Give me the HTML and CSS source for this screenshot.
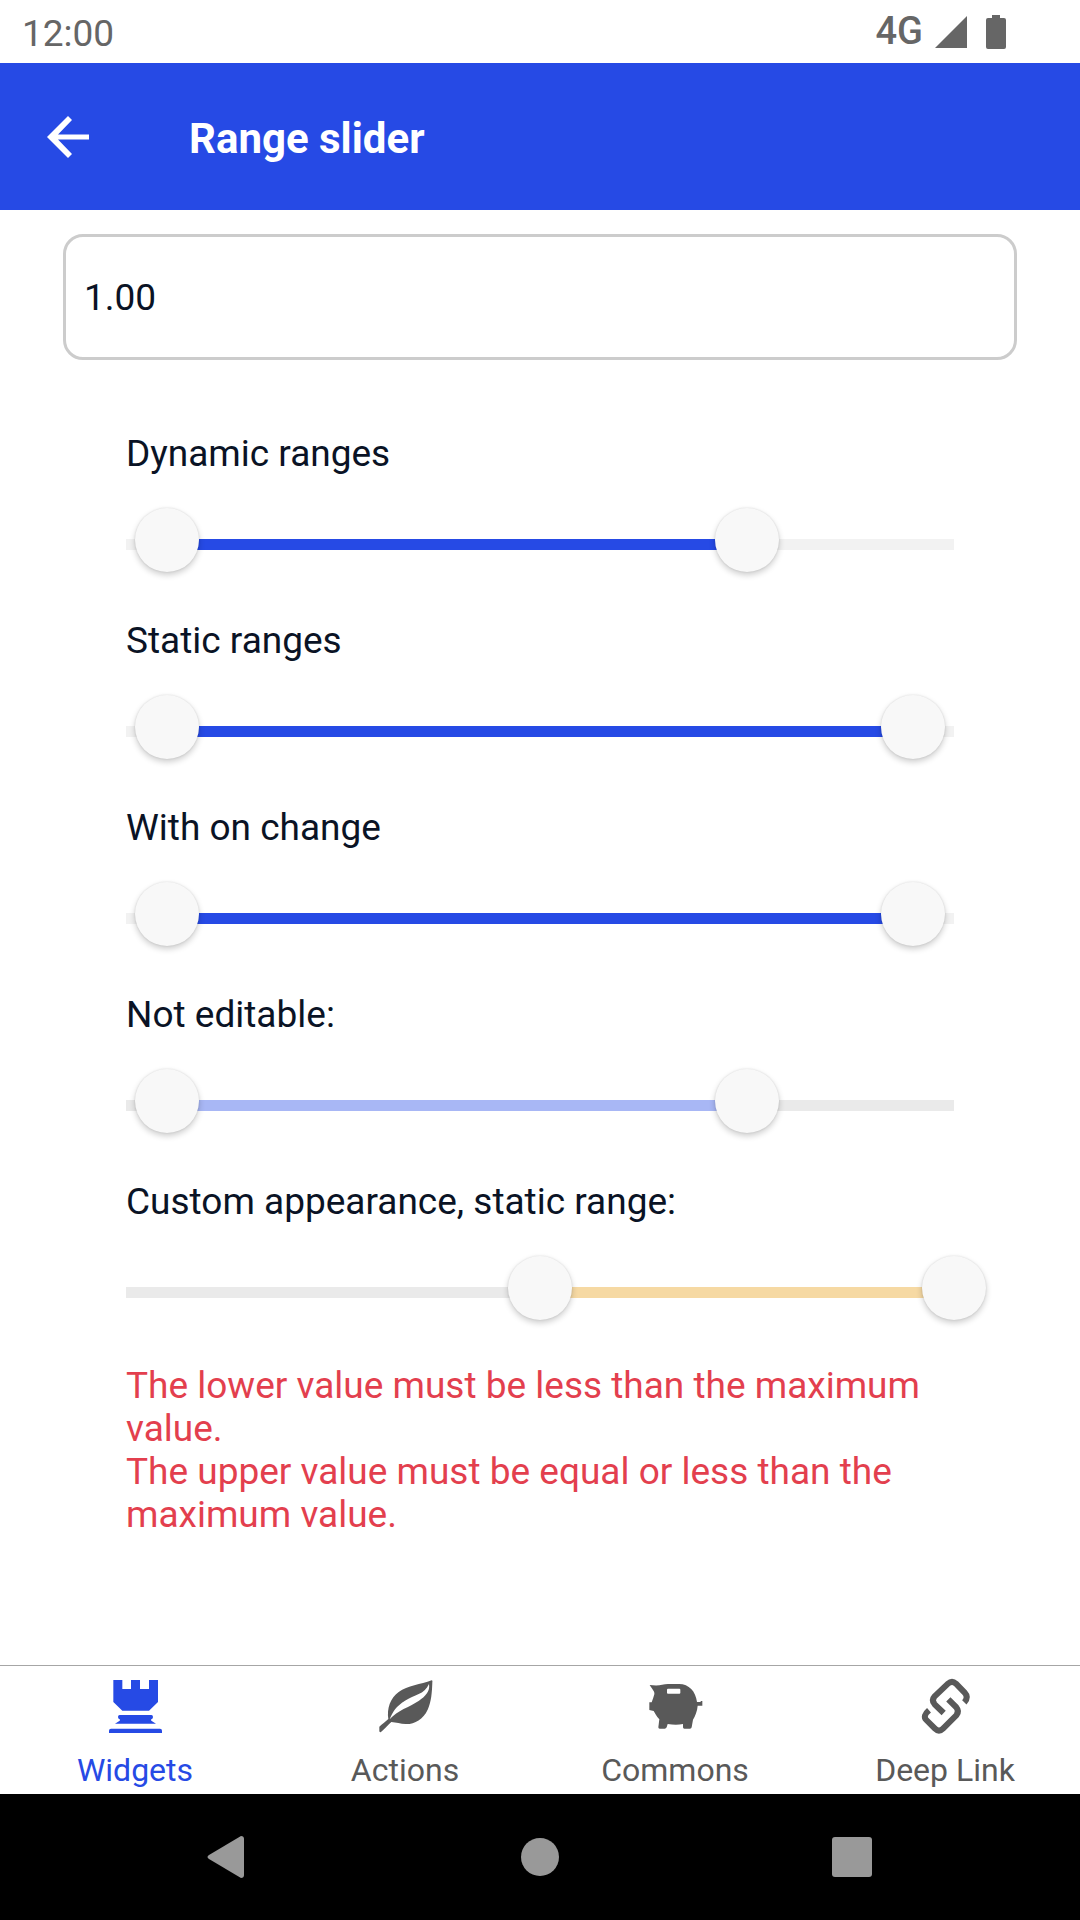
FILE: index.html
```html
<!DOCTYPE html>
<html lang="en">
<head>
  <meta charset="utf-8">
  <meta name="viewport" content="width=device-width, initial-scale=1">
  <title>Range slider</title>
  <link rel="stylesheet" href="styles.css">
</head>
<body>
  <div class="status-bar">
    <span class="clock">12:00</span>
    <div class="status-icons">
      <span class="network">4G</span>
      <svg class="signal" viewBox="0 0 32 32" aria-hidden="true"><path d="M32 0v32H0z"/></svg>
      <svg class="battery" viewBox="0 0 20 34" aria-hidden="true"><path d="M6 0h8v3h4a2 2 0 0 1 2 2v27a2 2 0 0 1-2 2H2a2 2 0 0 1-2-2V5a2 2 0 0 1 2-2h4z"/></svg>
    </div>
  </div>

  <header class="app-bar">
    <button class="back" type="button" aria-label="Back">
      <svg viewBox="0 0 42 42" aria-hidden="true"><path d="M21 0l4 4-14 14.500H42v5H11l14 14.500-4 4L0 21z"/></svg>
    </button>
    <h1 class="title">Range slider</h1>
  </header>

  <main class="content">
    <input class="field-input" type="text" value="1.00" aria-label="Step size">

    <div class="sliders">
      <div class="slider-list">
        <section class="slider-group">
          <h2 class="slider-title" id="dynamic">Dynamic ranges</h2>
          <div class="slider" style="--low: 5%; --high: 75%">
            <div class="track"></div>
            <input type="range" min="0" max="100" value="5" aria-labelledby="dynamic">
            <input type="range" min="0" max="100" value="75" aria-labelledby="dynamic">
          </div>
        </section>

        <section class="slider-group">
          <h2 class="slider-title" id="static">Static ranges</h2>
          <div class="slider" style="--low: 5%; --high: 95%">
            <div class="track"></div>
            <input type="range" min="0" max="100" value="5" aria-labelledby="static">
            <input type="range" min="0" max="100" value="95" aria-labelledby="static">
          </div>
        </section>

        <section class="slider-group">
          <h2 class="slider-title" id="change">With on change</h2>
          <div class="slider" style="--low: 5%; --high: 95%">
            <div class="track"></div>
            <input type="range" min="0" max="100" value="5" aria-labelledby="change">
            <input type="range" min="0" max="100" value="95" aria-labelledby="change">
          </div>
        </section>

        <section class="slider-group">
          <h2 class="slider-title" id="readonly">Not editable:</h2>
          <div class="slider slider-disabled" style="--low: 5%; --high: 75%">
            <div class="track"></div>
            <input type="range" min="0" max="100" value="5" aria-labelledby="readonly" disabled>
            <input type="range" min="0" max="100" value="75" aria-labelledby="readonly" disabled>
          </div>
        </section>

        <section class="slider-group">
          <h2 class="slider-title" id="custom">Custom appearance, static range:</h2>
          <div class="slider slider-custom" style="--low: 50%; --high: 100%">
            <div class="track"></div>
            <input type="range" min="0" max="100" value="50" aria-labelledby="custom" disabled>
            <input type="range" min="0" max="100" value="100" aria-labelledby="custom" disabled>
          </div>
        </section>
      </div>

      <div class="errors" role="alert">
        <p>The lower value must be less than the maximum value.</p>
        <p>The upper value must be equal or less than the maximum value.</p>
      </div>
    </div>
  </main>

  <nav class="tabs">
    <a class="tab tab-active" href="#widgets" aria-current="page">
      <svg viewBox="0 0 159 159" aria-hidden="true"><path d="M13 0h27v27h26V0h27v27h27V0h27v66l-27 26H40L13 66zM32 105h95q5 0 5 6t-5 7q-2 2 0 4l14 9H18l14-9q2-2 0-4-5-1-5-7t5-6zM6 146h147q6 0 6 6v7H0v-7q0-6 6-6z"/></svg>
      Widgets
    </a>
    <a class="tab" href="#actions">
      <svg viewBox="0 0 159 159" aria-hidden="true"><path fill-rule="evenodd" d="M158 1c2 0 3 2 2 6-1 30-3 60-14 82-14 30-40 44-66 43-16 0-28-5-43-6C28 134 16 148 5 157q-4 0-4-4v-13c8-8 18-14 27-23-5-30 6-64 31-81C86 16 125 14 158 1zM150 12C136 44 106 44 78 62 52 78 40 96 32 118 56 90 90 82 120 62 138 50 154 34 150 12z"/></svg>
      Actions
    </a>
    <a class="tab" href="#commons">
      <svg viewBox="0 0 159 159" aria-hidden="true"><path fill-rule="evenodd" d="M2 15q14 2 29 1C42 13 54 12 66 12h24c30 0 50 22 54 54h10l2-3h4v14h-14c-1 16-8 32-14 42l-4 23q-1 4-5 4h-17q-4 0-4-4v-10q-20 4-46 0l-3 10q-2 4-6 4H32q-4 0-4-4l3-24C22 108 18 100 14 93L1 90V67h7c3-8 6-16 8-24C18 34 8 26 2 15zM54 29v9q0 3 3 3h34q3 0 3-3v-9q0-3-3-3H57q-3 0-3 3z"/></svg>
      Commons
    </a>
    <a class="tab" href="#deep-link">
      <svg viewBox="0 0 159 159" aria-hidden="true"><g fill="none" stroke="currentColor" stroke-width="18"><path d="M74 99L47 73Q36 61 47 49L87 11Q99 0 111 11L137 38Q150 52 136 67"/><path d="M88 58L112 82Q122 94 112 106L72 146Q60 158 48 146L22 120Q10 108 30 91"/></g></svg>
      Deep Link
    </a>
  </nav>

  <div class="system-bar">
    <button type="button" aria-label="System back">
      <svg viewBox="0 0 42 42" aria-hidden="true"><path d="M34 0q3 0 3 3v36q0 3-3 3L2 23q-3-2 0-4z"/></svg>
    </button>
    <button type="button" aria-label="Home">
      <svg viewBox="0 0 42 42" aria-hidden="true"><circle cx="21" cy="21" r="19"/></svg>
    </button>
    <button type="button" aria-label="Recent apps">
      <svg viewBox="0 0 42 42" aria-hidden="true"><rect x="1" y="1" width="40" height="40" rx="3"/></svg>
    </button>
  </div>
</body>
</html>
```
FILE: styles.css
```css
* {
  box-sizing: border-box;
}

body {
  margin: 0;
  min-height: 100vh;
  display: flex;
  flex-direction: column;
  background: #fff;
  color: #0a1325;
  font-family: Roboto, "Noto Sans", sans-serif;
  font-size: 37px;
  line-height: 43px;
}

h1,
h2,
p {
  margin: 0;
  font: inherit;
}

button {
  display: flex;
  padding: 0;
  border: 0;
  background: none;
  color: inherit;
}

svg {
  display: block;
  fill: currentColor;
  overflow: visible;
}

/* Status bar */
.status-bar {
  display: flex;
  justify-content: space-between;
  align-items: center;
  height: 63px;
  padding: 0 74px 0 22px;
  color: #666;
}

.clock {
  padding-top: 3px;
}

.status-icons {
  display: flex;
  align-items: center;
}

.network {
  font-size: 38px;
  font-weight: 500;
}

.signal {
  width: 32px;
  height: 32px;
  margin: 0 19px 0 12px;
}

.battery {
  width: 20px;
  height: 34px;
}

/* App bar */
.app-bar {
  display: flex;
  align-items: center;
  gap: 100px;
  height: 147px;
  padding: 0 47px;
  background: #264ae5;
  color: #fff;
}

.back svg {
  width: 42px;
  height: 42px;
}

.title {
  padding-top: 4px;
  font-size: 42px;
  font-weight: 700;
  line-height: 50px;
}

/* Content */
.content {
  flex: 1;
  padding: 24px 63px 0;
}

.field-input {
  display: block;
  width: 100%;
  height: 126px;
  padding: 0 18px;
  border: 3px solid #ccc;
  border-radius: 20px;
  background: transparent;
  color: inherit;
  font: inherit;
}

.sliders {
  display: flex;
  flex-direction: column;
  gap: 44px;
  padding: 72px 63px 0;
}

.slider-list {
  display: flex;
  flex-direction: column;
  gap: 47px;
}

.slider-group {
  display: flex;
  flex-direction: column;
  gap: 33px;
}

.slider {
  --fill: #264ae5;
  --rail: #f2f2f2;
  display: grid;
}

.slider-disabled {
  --fill: #a8b7f5;
  --rail: #eaeaea;
}

.slider-custom {
  --fill: #f6d9a3;
  --rail: #eaeaea;
}

.slider > * {
  grid-area: 1 / 1;
}

.track {
  height: 11px;
  margin-top: 31px;
  background: linear-gradient(
    to right,
    var(--rail) var(--low),
    var(--fill) var(--low) var(--high),
    var(--rail) var(--high)
  );
}

.slider input {
  appearance: none;
  height: 64px;
  margin: 0 -32px;
  background: none;
  pointer-events: none;
}

.slider input::-webkit-slider-thumb {
  appearance: none;
  width: 64px;
  height: 64px;
  border-radius: 50%;
  background: #f8f8f8;
  box-shadow: 0 3px 6px rgba(0, 0, 0, 0.2), 0 0 2px rgba(0, 0, 0, 0.12);
  pointer-events: auto;
}

.errors {
  color: #e33f4e;
}

/* Tab bar */
.tabs {
  display: grid;
  grid-template-columns: repeat(4, 1fr);
  border-top: 1px solid #a6a6a6;
}

.tab {
  display: flex;
  flex-direction: column;
  align-items: center;
  gap: 18px;
  padding: 14px 0 5px;
  color: #595959;
  font-size: 32px;
  line-height: 38px;
  text-decoration: none;
}

.tab-active {
  color: #264ae5;
}

.tab svg {
  width: 53px;
  height: 53px;
}

/* System navigation */
.system-bar {
  display: flex;
  justify-content: space-between;
  align-items: center;
  height: 126px;
  padding: 0 207px;
  background: #000;
  color: #999;
}

.system-bar svg {
  width: 42px;
  height: 42px;
}
```
